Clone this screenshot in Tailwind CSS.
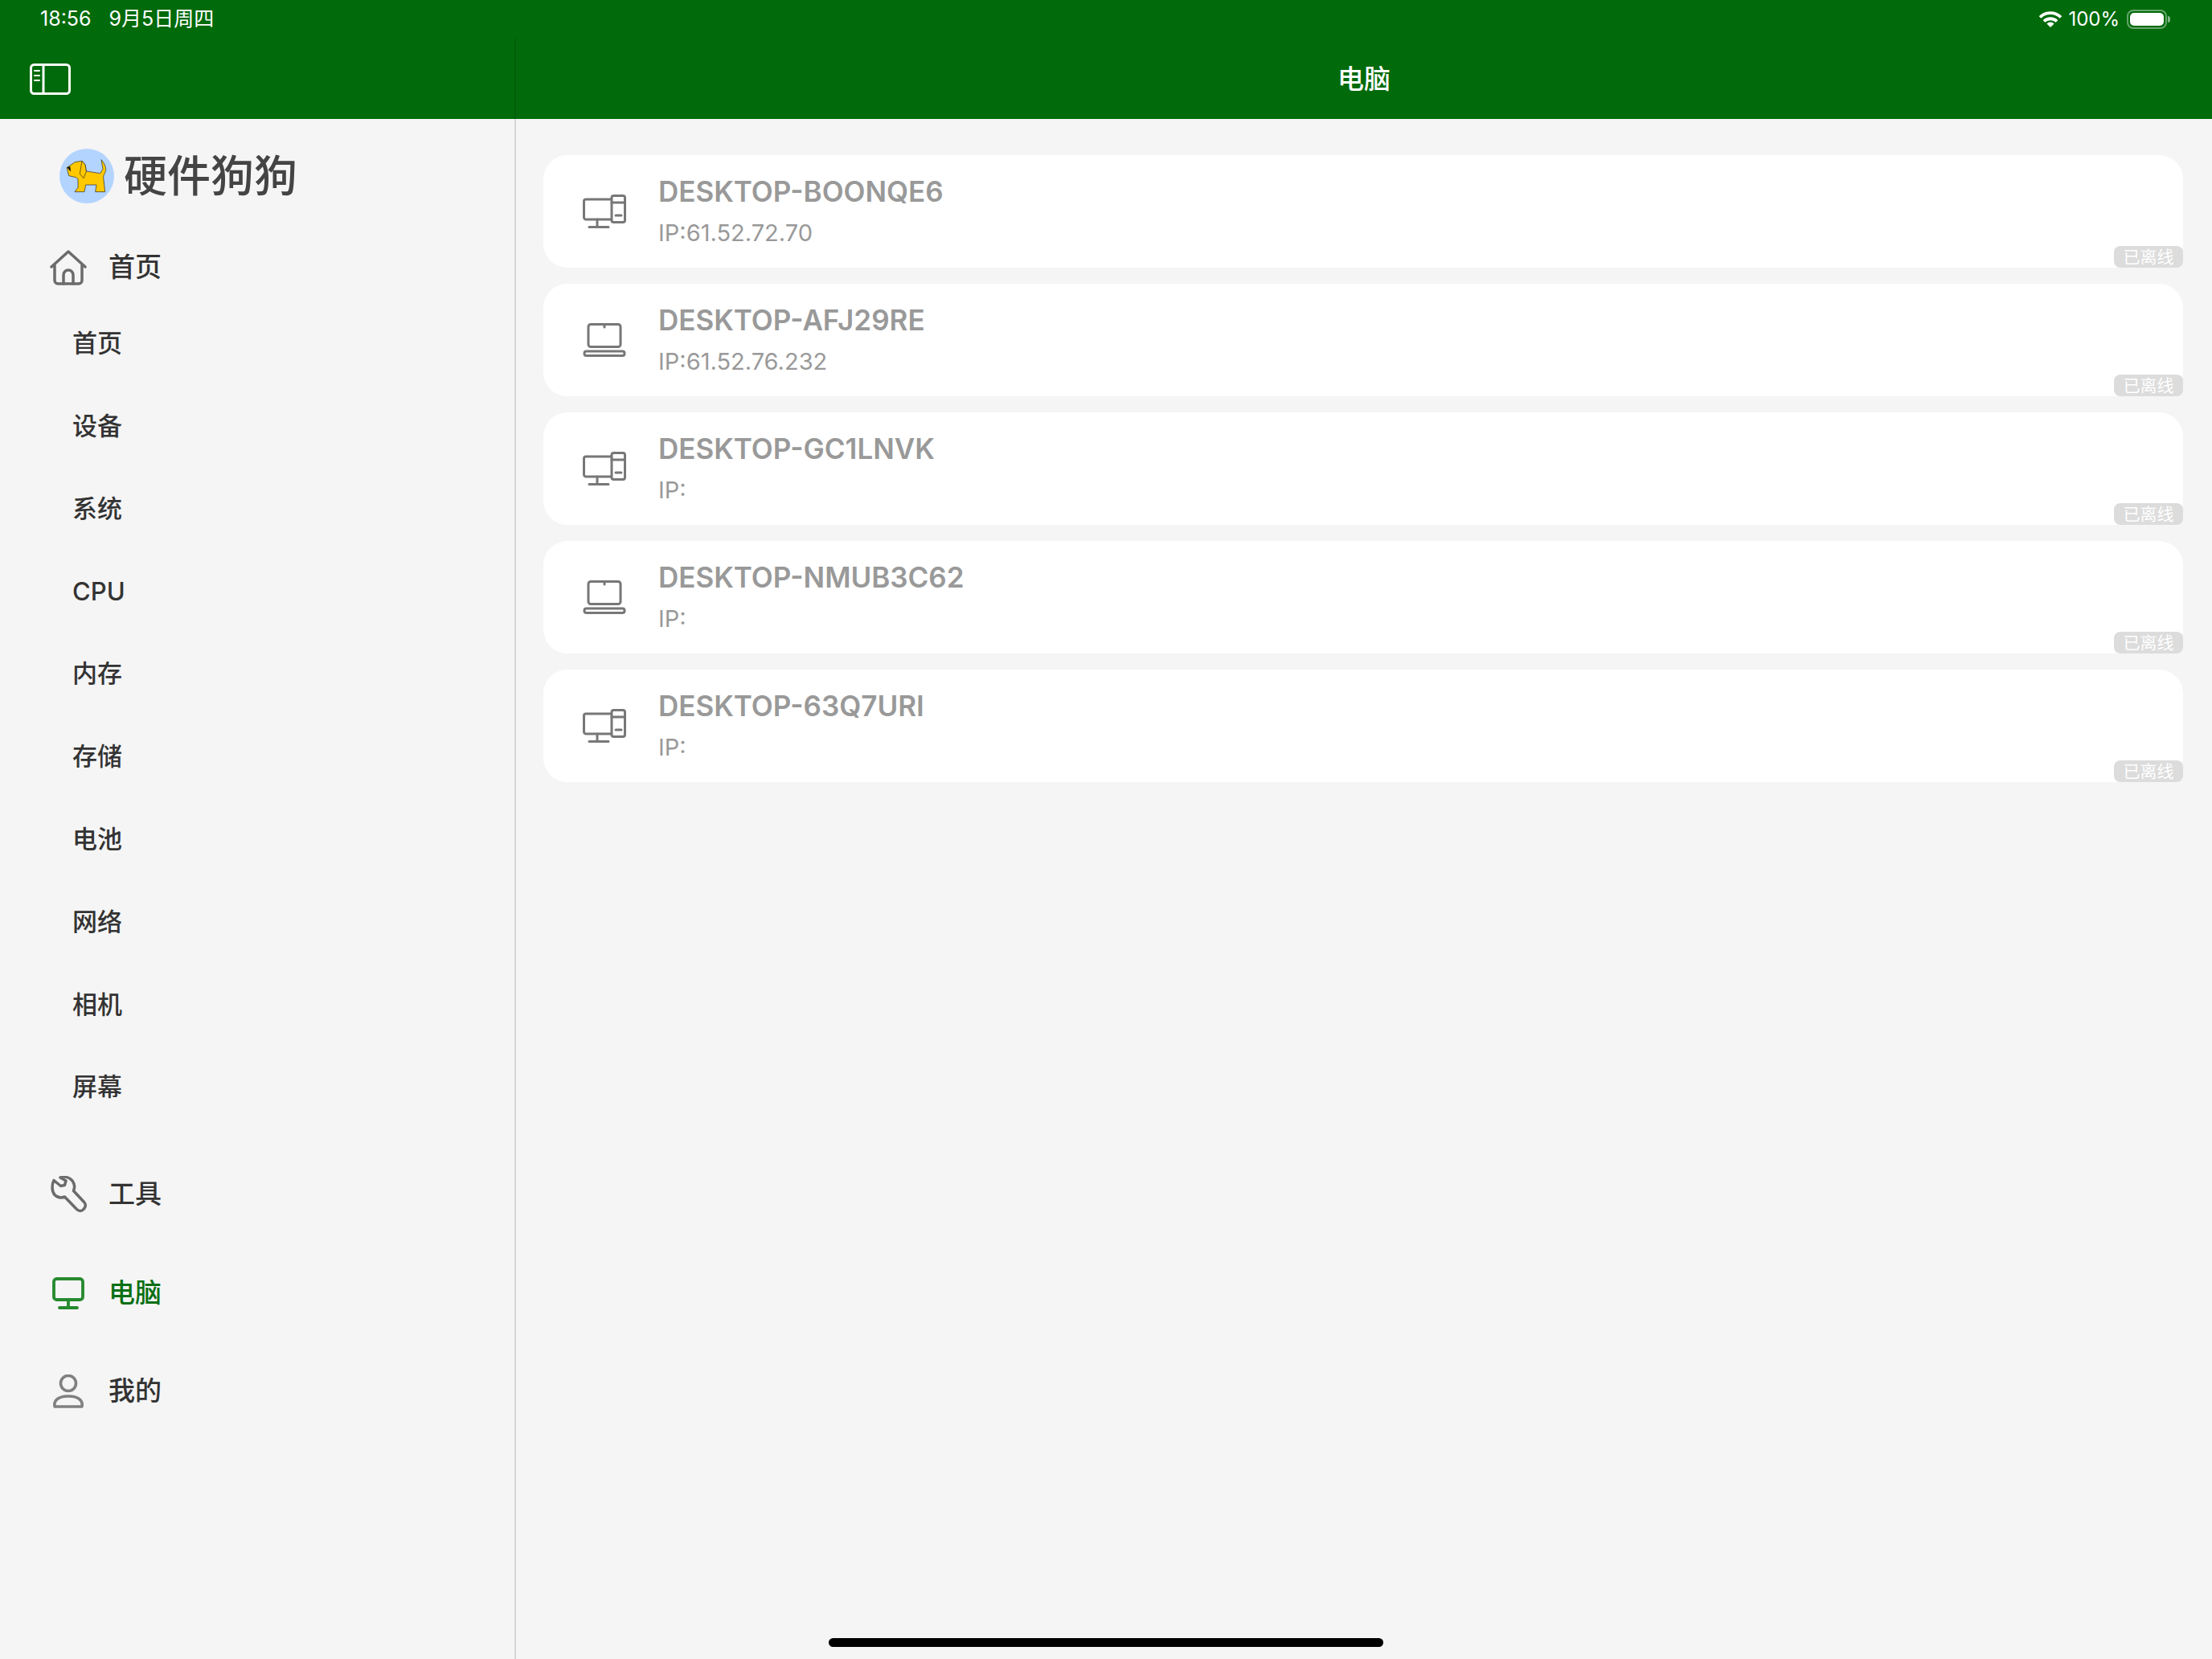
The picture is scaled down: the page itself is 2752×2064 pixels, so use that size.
<!DOCTYPE html>
<html lang="zh-CN">

<head>
    <meta charset="UTF-8">
    <title>电脑</title>
    <script src="https://cdn.jsdelivr.net/npm/@tailwindcss/browser@4"></script>
</head>

<body class="relative w-[2752px] h-[2064px] overflow-hidden bg-[#f5f5f5] font-['Inter','Noto_Sans_CJK_SC',sans-serif]">
    <!-- Header -->
    <header class="h-[148px] bg-[#016a0a] text-white flex flex-col">
        <div class="h-[48px] flex items-center justify-between pl-[50px] pr-[52px] text-[25px]">
            <div class="flex gap-[22px]">
                <span>18:56</span>
                <span>9月5日周四</span>
            </div>
            <div class="flex items-center">
                <svg class="w-[30px] h-[22px] mr-[7px]" viewBox="0 0 30 22" fill="none" stroke="white" stroke-width="3.8" stroke-linecap="butt">
                    <path d="M2 8.500a18.500 18.500 0 0 1 26 0" />
                    <path d="M7 13.500a11.500 11.500 0 0 1 16 0" />
                    <path d="M15 21l-4.600-4.600a6.500 6.500 0 0 1 9.200 0z" fill="white" stroke="none" />
                </svg>
                <span class="text-[24px]">100%</span>
                <div class="ml-[9px] flex items-center">
                    <div class="w-[50px] h-[24px] rounded-[8px] border-2 border-white/40 p-[2px]">
                        <div class="w-full h-full rounded-[5px] bg-white"></div>
                    </div>
                    <div class="w-[3px] h-[8px] rounded-r-full bg-white/50 ml-[1px]"></div>
                </div>
            </div>
        </div>
        <div class="flex-1 flex items-start">
            <div class="w-[642px] h-full pl-[37px] pt-[31px] border-r-2 border-[#015f09]">
                <svg class="w-[51px] h-[39px]" viewBox="0 0 51 39" fill="none" stroke="white" stroke-width="3" stroke-linecap="round">
                    <rect x="1.500" y="1.500" width="48" height="36" rx="4" />
                    <path d="M17 1.500v36" />
                    <path d="M6 9h6M6 15h6M6 21h6" stroke-width="2" />
                </svg>
            </div>
            <h1 class="flex-1 text-center text-[33px] leading-[48px] mt-[26px] font-medium">电脑</h1>
        </div>
    </header>

    <div class="flex h-[1916px]">
        <!-- Sidebar -->
        <aside class="w-[642px] shrink-0 border-r-2 border-[#d6d6d6] text-[#333]">
            <div class="flex items-center pl-[74px] pt-[36px]">
                <svg class="w-[68px] h-[68px]" viewBox="72 72 204 204">
                    <circle cx="174" cy="174" r="102" fill="#b3d4ff" />
                    <path d="M100 142l30-20 26-4 12 14 4 24 52 8 10-16-6-35c12 14 20 30 16 44-4 10-8 14-8 22l6 54h-36l4-26-40 0-5 26h-36l12-16v-32l-8-6-26-6-8-30z" fill="#ffc800" stroke="#222" stroke-width="2" stroke-linejoin="round" />
                    <path d="M100 142l12-4 2 20z" fill="#111" />
                    <path d="M156 118l12 14 4 26-10 24-14-16z" fill="#ffc800" stroke="#222" stroke-width="2" stroke-linejoin="round" />
                </svg>
                <span class="ml-[12px] mt-[2px] text-[54px] leading-[68px] font-medium text-[#444]">硬件狗狗</span>
            </div>

            <div class="mt-[49px] h-[60px] pl-[62px] flex items-center text-[33px] font-medium">
                <svg class="w-[46px] h-[44px]" viewBox="0 0 46 44" fill="none" stroke="#6b6b6b" stroke-width="3.500" stroke-linejoin="round" stroke-linecap="round">
                    <path d="M2 21L23 2l21 19" />
                    <path d="M6 19v19a4 4 0 0 0 4 4h26a4 4 0 0 0 4-4V19" />
                    <path d="M17 42V31a6 6 0 0 1 12 0v11" />
                </svg>
                <span class="ml-[27px]">首页</span>
            </div>

            <nav class="mt-[13px] pl-[90px] text-[31px] font-medium">
                <div class="h-[102.8px] flex items-center">首页</div>
                <div class="h-[102.8px] flex items-center">设备</div>
                <div class="h-[102.8px] flex items-center">系统</div>
                <div class="h-[102.8px] flex items-center">CPU</div>
                <div class="h-[102.8px] flex items-center">内存</div>
                <div class="h-[102.8px] flex items-center">存储</div>
                <div class="h-[102.8px] flex items-center">电池</div>
                <div class="h-[102.8px] flex items-center">网络</div>
                <div class="h-[102.8px] flex items-center">相机</div>
                <div class="h-[102.8px] flex items-center">屏幕</div>
            </nav>

            <div class="mt-[21px] text-[33px] font-medium">
                <div class="h-[122.5px] pl-[62px] flex items-center">
                    <svg class="w-[46px] h-[46px]" viewBox="0 0 46 46" fill="none" stroke="#6b6b6b" stroke-width="3.500" stroke-linejoin="round">
                        <path d="M5 5.500l8.500 7 5-1 1.500-5.500-7-4a14 14 0 0 1 15 4c3 4 3 9 1.500 12.500L43 33c2.500 3 1 8-3 10-2.500 1-5 .5-7-2L18.500 26c-4 1.500-9 1-12.500-2.500C2 19 2.500 10 5 5.500z" />
                    </svg>
                    <span class="ml-[27px]">工具</span>
                </div>
                <div class="h-[122.5px] pl-[62px] flex items-center text-[#0b6f14]">
                    <svg class="w-[46px] h-[40px]" viewBox="0 0 46 40" fill="none" stroke="#268a2f" stroke-width="3.800" stroke-linecap="round">
                        <rect x="5" y="2" width="36" height="26" rx="3.500" />
                        <path d="M23 28v9M12 38h22" />
                    </svg>
                    <span class="ml-[27px]">电脑</span>
                </div>
                <div class="h-[122.5px] pl-[62px] flex items-center">
                    <svg class="w-[46px] h-[42px]" viewBox="0 0 46 42" fill="none" stroke="#808080" stroke-width="3.600">
                        <circle cx="23" cy="11" r="9.500" />
                        <path d="M6 40c-1.500-8 5-13 17-13s18.500 5 17 13z" stroke-linejoin="round" />
                    </svg>
                    <span class="ml-[27px]">我的</span>
                </div>
            </div>
        </aside>

        <!-- Device list -->
        <main class="flex-1 pl-[34px] pr-[36px] pt-[45px] flex flex-col gap-[20px]">
            <div class="relative h-[140px] bg-white rounded-[30px] flex items-center pl-[49px]">
                <svg class="w-[54px] h-[42px] text-[#777]" viewBox="0 0 54 42" fill="none" stroke="currentColor" stroke-width="3" stroke-linecap="round" stroke-linejoin="round">
                    <path d="M35 6H4a2.500 2.500 0 0 0-2.500 2.500v20A2.500 2.500 0 0 0 4 31h31" />
                    <rect x="36" y="1.500" width="16.500" height="33" rx="2.500" />
                    <path d="M36 10h16.500M41 26h7M18 31v8M8 40.500h24" />
                </svg>
                <div class="ml-[40px] -mt-[1px]">
                    <div class="text-[35px] leading-[46px] font-semibold text-[#999]">DESKTOP-BOONQE6</div>
                    <div class="text-[29px] leading-[40px] mt-[9px] text-[#999]">IP:61.52.72.70</div>
                </div>
                <span class="absolute right-0 bottom-0 w-[86px] h-[27px] rounded-[8px] bg-[#dcdcdc] text-white text-[21px] leading-[27px] text-center">已离线</span>
            </div>
            <div class="relative h-[140px] bg-white rounded-[30px] flex items-center pl-[49px]">
                <svg class="w-[54px] h-[42px] text-[#777]" viewBox="0 0 54 42" fill="none" stroke="currentColor" stroke-width="3" stroke-linecap="round" stroke-linejoin="round">
                    <rect x="7" y="1.500" width="40" height="28" rx="3" />
                    <path d="M27 2v3" />
                    <rect x="2" y="35" width="50" height="5.500" rx="2.500" />
                </svg>
                <div class="ml-[40px] -mt-[1px]">
                    <div class="text-[35px] leading-[46px] font-semibold text-[#999]">DESKTOP-AFJ29RE</div>
                    <div class="text-[29px] leading-[40px] mt-[9px] text-[#999]">IP:61.52.76.232</div>
                </div>
                <span class="absolute right-0 bottom-0 w-[86px] h-[27px] rounded-[8px] bg-[#dcdcdc] text-white text-[21px] leading-[27px] text-center">已离线</span>
            </div>
            <div class="relative h-[140px] bg-white rounded-[30px] flex items-center pl-[49px]">
                <svg class="w-[54px] h-[42px] text-[#777]" viewBox="0 0 54 42" fill="none" stroke="currentColor" stroke-width="3" stroke-linecap="round" stroke-linejoin="round">
                    <path d="M35 6H4a2.500 2.500 0 0 0-2.500 2.500v20A2.500 2.500 0 0 0 4 31h31" />
                    <rect x="36" y="1.500" width="16.500" height="33" rx="2.500" />
                    <path d="M36 10h16.500M41 26h7M18 31v8M8 40.500h24" />
                </svg>
                <div class="ml-[40px] -mt-[1px]">
                    <div class="text-[35px] leading-[46px] font-semibold text-[#999]">DESKTOP-GC1LNVK</div>
                    <div class="text-[29px] leading-[40px] mt-[9px] text-[#999]">IP:</div>
                </div>
                <span class="absolute right-0 bottom-0 w-[86px] h-[27px] rounded-[8px] bg-[#dcdcdc] text-white text-[21px] leading-[27px] text-center">已离线</span>
            </div>
            <div class="relative h-[140px] bg-white rounded-[30px] flex items-center pl-[49px]">
                <svg class="w-[54px] h-[42px] text-[#777]" viewBox="0 0 54 42" fill="none" stroke="currentColor" stroke-width="3" stroke-linecap="round" stroke-linejoin="round">
                    <rect x="7" y="1.500" width="40" height="28" rx="3" />
                    <path d="M27 2v3" />
                    <rect x="2" y="35" width="50" height="5.500" rx="2.500" />
                </svg>
                <div class="ml-[40px] -mt-[1px]">
                    <div class="text-[35px] leading-[46px] font-semibold text-[#999]">DESKTOP-NMUB3C62</div>
                    <div class="text-[29px] leading-[40px] mt-[9px] text-[#999]">IP:</div>
                </div>
                <span class="absolute right-0 bottom-0 w-[86px] h-[27px] rounded-[8px] bg-[#dcdcdc] text-white text-[21px] leading-[27px] text-center">已离线</span>
            </div>
            <div class="relative h-[140px] bg-white rounded-[30px] flex items-center pl-[49px]">
                <svg class="w-[54px] h-[42px] text-[#777]" viewBox="0 0 54 42" fill="none" stroke="currentColor" stroke-width="3" stroke-linecap="round" stroke-linejoin="round">
                    <path d="M35 6H4a2.500 2.500 0 0 0-2.500 2.500v20A2.500 2.500 0 0 0 4 31h31" />
                    <rect x="36" y="1.500" width="16.500" height="33" rx="2.500" />
                    <path d="M36 10h16.500M41 26h7M18 31v8M8 40.500h24" />
                </svg>
                <div class="ml-[40px] -mt-[1px]">
                    <div class="text-[35px] leading-[46px] font-semibold text-[#999]">DESKTOP-63Q7URI</div>
                    <div class="text-[29px] leading-[40px] mt-[9px] text-[#999]">IP:</div>
                </div>
                <span class="absolute right-0 bottom-0 w-[86px] h-[27px] rounded-[8px] bg-[#dcdcdc] text-white text-[21px] leading-[27px] text-center">已离线</span>
            </div>
        </main>
    </div>

    <!-- Home indicator -->
    <div class="absolute left-[1031px] top-[2038px] w-[690px] h-[11px] rounded-full bg-black"></div>
</body>

</html>
